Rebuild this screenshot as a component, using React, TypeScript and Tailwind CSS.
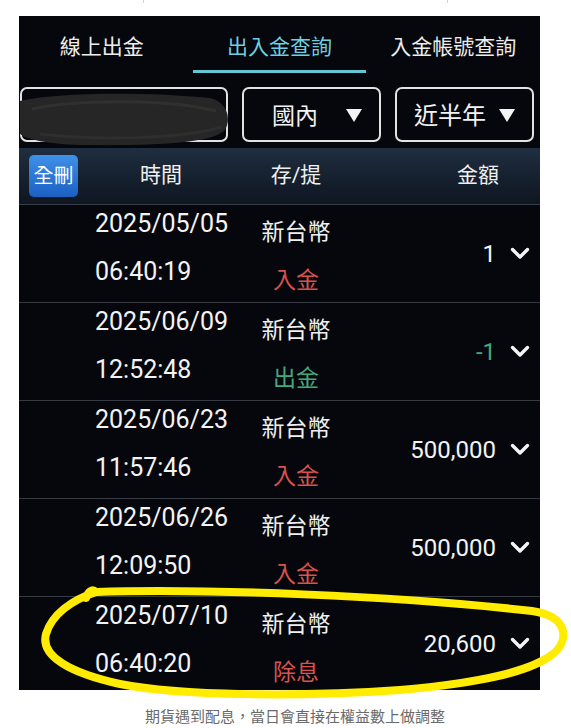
const font = { fontFamily: 'Roboto, "Noto Sans CJK TC", sans-serif' };

const records = [
  { date: '2025/05/05', time: '06:40:19', type: '入金', amount: '1', tone: 'in' },
  { date: '2025/06/09', time: '12:52:48', type: '出金', amount: '-1', tone: 'out' },
  { date: '2025/06/23', time: '11:57:46', type: '入金', amount: '500,000', tone: 'in' },
  { date: '2025/06/26', time: '12:09:50', type: '入金', amount: '500,000', tone: 'in' },
  { date: '2025/07/10', time: '06:40:20', type: '除息', amount: '20,600', tone: 'in' },
];

function Caret() {
  return (
    <svg width="16" height="14" viewBox="0 0 16 14" className="mr-[17px] shrink-0">
      <polygon points="0,1 16,1 8,14" fill="#f4f4f4" />
    </svg>
  );
}

function Chevron() {
  return (
    <svg width="20" height="13" viewBox="0 0 20 13" className="shrink-0">
      <path d="M2.5 2.5 L10 10 L17.5 2.5" fill="none" stroke="#f4f4f4" strokeWidth="3.4" strokeLinecap="round" strokeLinejoin="round" />
    </svg>
  );
}

export default function App() {
  const tabs = ['線上出金', '出入金查詢', '入金帳號查詢'];

  return (
    <div className="relative w-[571px] h-[728px] bg-white overflow-hidden" style={font}>
      {/* leftover lines from the page above */}
      <div className="flex h-4">
        <div className="w-[143px]" />
        <div className="w-px h-[3px] bg-[#d4d4d4]" />
        <div className="w-[303px]" />
        <div className="w-px h-[3px] bg-[#d4d4d4]" />
      </div>

      {/* app screenshot */}
      <div className="ml-[19px] w-[521px] h-[674px] bg-[#06070d] flex flex-col overflow-hidden">
        {/* tabs */}
        <div className="grid grid-cols-3 h-[57px]">
          {tabs.map((t, i) => (
            <div key={t} className="flex flex-col items-center">
              <div
                className={`pt-[16px] leading-[30px] text-[21px] ${
                  i === 1 ? 'text-[#6fcfe0]' : 'text-[#ededed]'
                } ${i === 0 ? 'pr-[8px]' : ''}`}
              >
                {t}
              </div>
              <div className="flex-1" />
              <div className={`h-[3px] w-full ${i === 1 ? 'bg-[#63c5d6]' : ''}`} />
            </div>
          ))}
        </div>

        {/* filters */}
        <div className="mt-[14px] flex gap-[14px] pl-px h-[55px]">
          <div className="relative w-[208px] h-full rounded-[7px] border-2 border-[#e2e2e2]">
            <svg className="absolute left-[-2px] top-[-2px] overflow-visible" width="208" height="58" viewBox="0 0 208 58">
              <path
                d="M0 14 C30 6 120 4 190 11 C208 15 212 34 204 44 C190 55 150 59 60 58 C30 57 8 53 0 47 Z"
                fill="#262626"
              />
              <path d="M12 22 C60 12 150 12 196 24" fill="none" stroke="#303030" strokeWidth="3" />
              <path d="M20 47 C80 54 160 52 202 40" fill="none" stroke="#2e2e2e" strokeWidth="3" />
            </svg>
          </div>
          <div className="w-[139px] h-full rounded-[7px] border-2 border-[#e2e2e2] flex items-center">
            <div className="flex-1 text-center text-[23px] text-[#f2f2f2] leading-none pt-[3px]">國內</div>
            <Caret />
          </div>
          <div className="w-[139px] h-full rounded-[7px] border-2 border-[#e2e2e2] flex items-center">
            <div className="flex-1 text-center text-[24px] text-[#f2f2f2] leading-none pl-[4px] pt-[3px]">近半年</div>
            <Caret />
          </div>
        </div>

        {/* column header */}
        <div className="mt-[6px] h-[57px] shrink-0 flex items-center bg-linear-to-b from-[#1f2e40] to-[#0e1620] border-b border-[#3a4049]">
          <div className="ml-[10px] w-[49px] h-[42px] rounded-[5px] bg-linear-to-b from-[#3f90e8] to-[#1c60c2] flex items-center justify-center text-[20px] text-white">
            全刪
          </div>
          <div className="w-[166px] text-center text-[21px] text-[#f0f0f0]">時間</div>
          <div className="w-[104px] text-center text-[21px] text-[#f0f0f0]">存/提</div>
          <div className="flex-1 text-right pr-[41px] text-[21px] text-[#f0f0f0]">金額</div>
        </div>

        {/* records */}
        {records.map((r, i) => (
          <div
            key={r.date}
            className={`flex shrink-0 ${i < records.length - 1 ? 'h-[98px] border-b border-[#353a43]' : 'flex-1'}`}
          >
            <div className="ml-[76px] w-[149px] pt-[4px] flex flex-col gap-[18px] text-[25px] leading-[30px] text-[#f3f3f3]">
              <div>{r.date}</div>
              <div>{r.time}</div>
            </div>
            <div className="w-[104px] pt-[13px] flex flex-col items-center gap-[18px] text-[23px] leading-[30px]">
              <div className="text-[#f0f0f0]">新台幣</div>
              <div className={r.tone === 'out' ? 'text-[#43a97e]' : 'text-[#d9534c]'}>{r.type}</div>
            </div>
            <div className="flex-1 flex items-center justify-end gap-[14px] pr-[10px]">
              <span className={`text-[24px] ${r.tone === 'out' ? 'text-[#43a97e]' : 'text-[#f3f3f3]'}`}>
                {r.amount}
              </span>
              <Chevron />
            </div>
          </div>
        ))}
      </div>

      <p className="mt-[17px] pl-[145px] text-[15px] leading-[20px] text-[#6a6a6a]">
        期貨遇到配息，當日會直接在權益數上做調整
      </p>

      {/* hand-drawn highlight */}
      <svg className="absolute left-0 top-0 pointer-events-none" width="571" height="728" viewBox="0 0 571 728">
        <path
          d="M86 598 C88 592 92 588 96 592 C200 588 400 596 532 611 C568 616 570 640 553 654 C530 672 480 683 400 690 C300 697 180 696 120 684 C70 673 40 656 46 634 C52 614 72 600 96 592"
          fill="none"
          stroke="#ffec00"
          strokeWidth="8"
          strokeLinecap="round"
          strokeLinejoin="round"
        />
      </svg>
    </div>
  );
}
